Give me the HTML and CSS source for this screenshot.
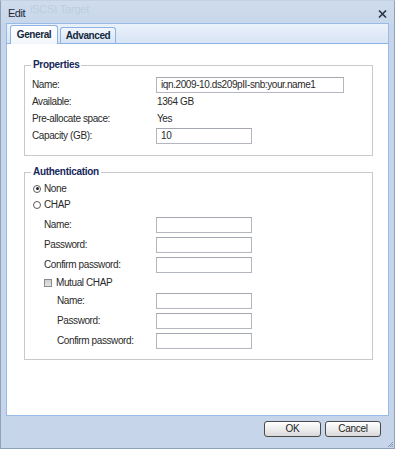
FILE: index.html
```html
<!DOCTYPE html>
<html>
<head>
<meta charset="utf-8">
<link rel="stylesheet" href="styles.css">
</head>
<body>
<div class="window">
  <div class="titlebar">
    <span class="title">Edit</span><span class="ghost">iSCSI Target</span>
    <span class="close"><svg width="9" height="8" viewBox="0 0 9 8"><path d="M1 0.5 L8 7.5 M8 0.5 L1 7.5" stroke="#2a3442" stroke-width="1.6" fill="none"/></svg></span>
  </div>
  <div class="tabstrip">
    <div class="tab active">General</div>
    <div class="tab">Advanced</div>
  </div>
  <div class="panel">
    <fieldset class="fs props">
      <legend>Properties</legend>
      <div class="row"><span class="lbl">Name:</span><div class="inp wide">iqn.2009-10.ds209pII-snb:your.name1</div></div>
      <div class="row"><span class="lbl">Available:</span><span class="val">1364 GB</span></div>
      <div class="row"><span class="lbl">Pre-allocate space:</span><span class="val">Yes</span></div>
      <div class="row"><span class="lbl">Capacity (GB):</span><div class="inp">10</div></div>
    </fieldset>
    <fieldset class="fs auth">
      <legend>Authentication</legend>
      <div class="opt"><span class="radio checked"></span><span>None</span></div>
      <div class="opt"><span class="radio"></span><span>CHAP</span></div>
      <div class="row sub g4"><span class="lbl">Name:</span><div class="inp"></div></div>
      <div class="row sub g4"><span class="lbl">Password:</span><div class="inp"></div></div>
      <div class="row sub g4"><span class="lbl">Confirm password:</span><div class="inp"></div></div>
      <div class="opt chk g2"><span class="check"></span><span>Mutual CHAP</span></div>
      <div class="row sub2 g2"><span class="lbl">Name:</span><div class="inp"></div></div>
      <div class="row sub2 g4"><span class="lbl">Password:</span><div class="inp"></div></div>
      <div class="row sub2 g4"><span class="lbl">Confirm password:</span><div class="inp"></div></div>
    </fieldset>
  </div>
  <div class="footer">
    <button class="btn ok">OK</button>
    <button class="btn cancel">Cancel</button>
  </div>
  <svg class="grip" width="7" height="7" viewBox="0 0 7 7"><path d="M6 1 L1 6 M6 3 L3 6 M6 5 L5 6" stroke="#8a9ab0" stroke-width="1" fill="none"/></svg>
</div>
</body>
</html>
```
FILE: styles.css
```css
* { box-sizing: border-box; }
body {
  margin: 0;
  font-family: "Liberation Sans", Arial, sans-serif;
  font-size: 10px;
  letter-spacing: -0.4px;
  color: #2a2a2a;
  background: #fff;
}
.window {
  position: relative;
  width: 395px;
  height: 449px;
  display: flex;
  flex-direction: column;
  background: #c6d5e9;
  border: 1px solid #8fa2bb;
  border-top-color: #c3d1e3;
  padding: 0 5px;
}
.titlebar {
  height: 22px;
  display: flex;
  align-items: center;
  background: linear-gradient(#cfdcec, #c8d7ea);
  margin: 0 -5px;
  padding: 0 6px 0 7px;
}
.title {
  font-size: 11px;
  letter-spacing: -0.5px;
  color: #1b2a3c;
  margin-top: 2px;
}
.ghost {
  font-size: 11px;
  letter-spacing: -0.2px;
  color: #bfcde0;
  margin-left: 5px;
  align-self: flex-start;
  margin-top: 2px;
}
.close {
  margin-left: auto;
  display: flex;
  margin-top: 3px;
  margin-right: 1px;
}
.tabstrip {
  height: 21px;
  border: 1px solid #99bbe8;
  border-bottom-color: #8db2e3;
  background: linear-gradient(#eaf1fa, #d8e5f4);
  display: flex;
  align-items: flex-end;
  padding-left: 3px;
  gap: 2px;
}
.tab {
  border: 1px solid #8db2e3;
  border-bottom: none;
  border-radius: 3px 3px 0 0;
  font-weight: bold;
  color: #15283e;
  text-align: center;
  height: 16px;
  line-height: 15px;
  width: 56px;
  background: linear-gradient(#f3f7fc, #d6e3f3);
}
.tab.active {
  width: 48px;
  height: 19px;
  line-height: 17px;
  margin-bottom: -1px;
  background: linear-gradient(#ffffff, #f2f6fb);
}
.panel {
  flex: 1;
  background: #fff;
  border: 1px solid #99bbe8;
  border-top: none;
  padding: 15px 15px 0 17px;
}
.fs {
  margin: 0;
  border: 1px solid #c9c9c9;
  padding: 6px 7px 11px 7px;
}
.fs legend {
  padding: 0 2px;
  margin-left: -1px;
  font-weight: bold;
  color: #15285a;
  line-height: 12px;
  letter-spacing: -0.3px;
}
.props {
  display: flex;
  flex-direction: column;
  gap: 1px;
}
.auth {
  margin-top: 10px;
  padding-top: 3px;
  padding-bottom: 10px;
}
.row {
  display: grid;
  grid-template-columns: 124px 1fr;
  height: 16px;
  align-items: center;
}
.row.sub .lbl { padding-left: 12px; }
.row.sub2 .lbl { padding-left: 25px; }
.g4 { margin-top: 4px; }
.g2 { margin-top: 2px; }
.lbl, .val { line-height: 16px; white-space: nowrap; }
.val { padding-left: 1px; }
.inp {
  width: 96px;
  height: 16px;
  border: 1px solid #b3b8c0;
  border-top-color: #a3a8b0;
  background: #fff;
  line-height: 14px;
  padding-left: 4px;
  white-space: nowrap;
  overflow: hidden;
}
.inp.wide { width: 188px; }
.opt {
  display: flex;
  align-items: center;
  height: 16px;
  line-height: 16px;
}
.radio {
  width: 8px;
  height: 8px;
  border: 1px solid #5c5c5c;
  border-radius: 50%;
  background: #fff;
  margin-left: 1px;
  margin-right: 3px;
  margin-top: -1px;
  display: flex;
  align-items: center;
  justify-content: center;
}
.radio.checked::after {
  content: "";
  width: 3px;
  height: 3px;
  border-radius: 50%;
  background: #222;
}
.opt.chk { padding-left: 12px; }
.check {
  width: 8px;
  height: 8px;
  border: 1px solid #8a8a8a;
  background: linear-gradient(#cfcfcf, #e4e4e4);
  margin-right: 4px;
  margin-top: -1px;
}
.footer {
  height: 32px;
  display: flex;
  justify-content: flex-end;
  align-items: flex-start;
  padding-top: 5px;
  padding-right: 8px;
  gap: 4px;
}
.btn {
  height: 16px;
  border: 1px solid #4a4a4a;
  border-radius: 3px;
  background: linear-gradient(#ffffff, #ececec 55%, #d9d9d9);
  font-family: inherit;
  font-size: 10px;
  letter-spacing: -0.3px;
  color: #222;
  padding: 0;
  line-height: 14px;
}
.btn.ok { width: 57px; }
.btn.cancel { width: 56px; }
.grip {
  position: absolute;
  right: 0;
  bottom: 0;
}
```
